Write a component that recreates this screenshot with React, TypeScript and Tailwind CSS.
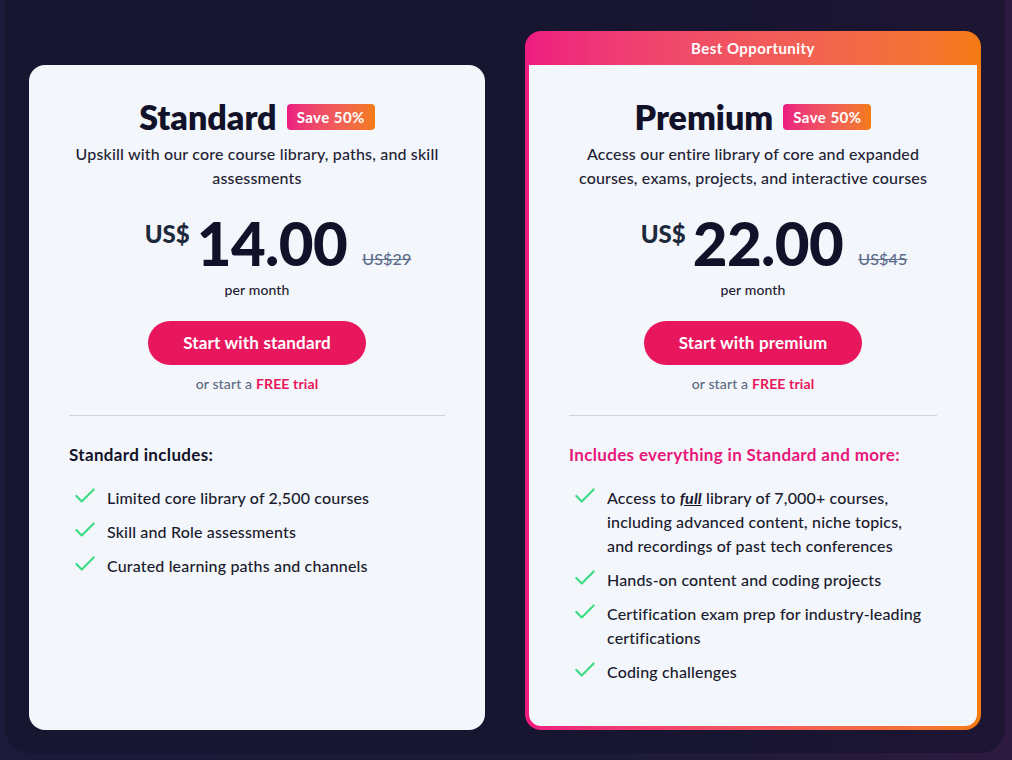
import { Check } from 'lucide-react'

interface Plan {
  name: string
  description: string
  price: string
  oldPrice: string
  cta: string
  includesTitle: string
  features: React.ReactNode[]
  highlight?: boolean
}

const plans: Plan[] = [
  {
    name: 'Standard',
    description: 'Upskill with our core course library, paths, and skill assessments',
    price: '14.00',
    oldPrice: 'US$29',
    cta: 'Start with standard',
    includesTitle: 'Standard includes:',
    features: [
      'Limited core library of 2,500 courses',
      'Skill and Role assessments',
      'Curated learning paths and channels',
    ],
  },
  {
    name: 'Premium',
    description: 'Access our entire library of core and expanded courses, exams, projects, and interactive courses',
    price: '22.00',
    oldPrice: 'US$45',
    cta: 'Start with premium',
    includesTitle: 'Includes everything in Standard and more:',
    highlight: true,
    features: [
      <>
        Access to <em className="font-bold underline">full</em> library of 7,000+ courses,
        <br />
        including advanced content, niche topics,
        <br />
        and recordings of past tech conferences
      </>,
      'Hands-on content and coding projects',
      'Certification exam prep for industry-leading certifications',
      'Coding challenges',
    ],
  },
]

function PlanBody({ plan }: { plan: Plan }) {
  return (
    <div className="flex flex-col px-10 pt-[32px] pb-8">
      <div className="flex items-center justify-center gap-[10px]">
        <h2 className="text-[34px] leading-[40px] font-extrabold text-[#12112a]">{plan.name}</h2>
        <span className="flex h-[26px] items-center rounded-[4px] bg-gradient-to-r from-[#ec1a80] to-[#f47b10] px-[10px] text-[15px] font-bold tracking-[0.03em] text-white">
          Save 50%
        </span>
      </div>
      <p className="mt-[5px] text-center text-[16px] leading-6 font-medium tracking-[0.01em] text-[#1f2335]">
        {plan.description}
      </p>

      <div className="mt-[27px] flex items-start justify-center pl-[42px]">
        <span className="mt-[5px] text-[24px] font-black leading-none text-[#1e293b]">US$</span>
        <span className="ml-[7px] text-[60px] font-black leading-[52px] tracking-[-0.01em] text-[#12112a]">
          {plan.price}
        </span>
        <span className="ml-[15px] mb-[2px] self-end text-[16px] font-medium leading-none tracking-[0.01em] text-[#5b6d8a] line-through">
          {plan.oldPrice}
        </span>
      </div>
      <p className="mt-[11px] text-center text-[14px] leading-5 font-medium tracking-[0.01em] text-[#1f2335]">
        per month
      </p>

      <div className="mt-[21px] flex justify-center">
        <button className="h-11 rounded-full bg-[#e8175d] px-[35px] text-[17px] font-bold tracking-[0.01em] text-white">
          {plan.cta}
        </button>
      </div>
      <p className="mt-[9px] text-center text-[14px] leading-5 font-medium tracking-[0.01em] text-[#5c6b85]">
        or start a <span className="font-bold text-[#e8175d]">FREE trial</span>
      </p>

      <hr className="mt-[21px] border-t border-[#cbd5e1]" />

      <h3
        className={
          plan.highlight
            ? 'mt-[27px] text-[17px] leading-6 font-bold tracking-[0.02em] text-[#e8177a]'
            : 'mt-[27px] text-[17px] leading-6 font-bold tracking-[0.02em] text-[#12112a]'
        }
      >
        {plan.includesTitle}
      </h3>

      <ul className="mt-[19px] flex flex-col gap-[10px] pl-[3px]">
        {plan.features.map((f, i) => (
          <li
            key={i}
            className="flex items-start gap-[9px] text-[16px] leading-6 font-medium tracking-[0.01em] text-[#1a1a2e]"
          >
            <Check className="mt-[-3px] h-[26px] w-[26px] shrink-0 text-[#3ddc84]" strokeWidth={2} />
            <span>{f}</span>
          </li>
        ))}
      </ul>
    </div>
  )
}

export default function App() {
  return (
    <div
      className="h-[760px] w-full bg-[linear-gradient(90deg,#1b1a3a_0%,#1c1a38_60%,#2e1a40_100%)]"
      style={{ fontFamily: 'Lato, "Noto Sans", sans-serif' }}
    >
      <div className="mx-[5px] flex h-[753px] w-[1000px] gap-10 rounded-b-3xl bg-[linear-gradient(90deg,#181530_0%,#181530_75%,#1e1532_100%)] px-6 pt-[31px] pb-[23px]">
        <div className="mt-[34px] w-[456px] shrink-0 rounded-2xl bg-[#f3f6fa]">
          <PlanBody plan={plans[0]} />
        </div>
        <div className="flex w-[456px] shrink-0 flex-col rounded-2xl bg-gradient-to-r from-[#ee1a80] to-[#f47b10] px-1 pb-1">
          <div className="flex h-[34px] items-center justify-center text-[15px] font-bold tracking-[0.03em] text-white">
            Best Opportunity
          </div>
          <div className="flex-1 rounded-b-xl bg-[#f3f6fa]">
            <PlanBody plan={plans[1]} />
          </div>
        </div>
      </div>
    </div>
  )
}
